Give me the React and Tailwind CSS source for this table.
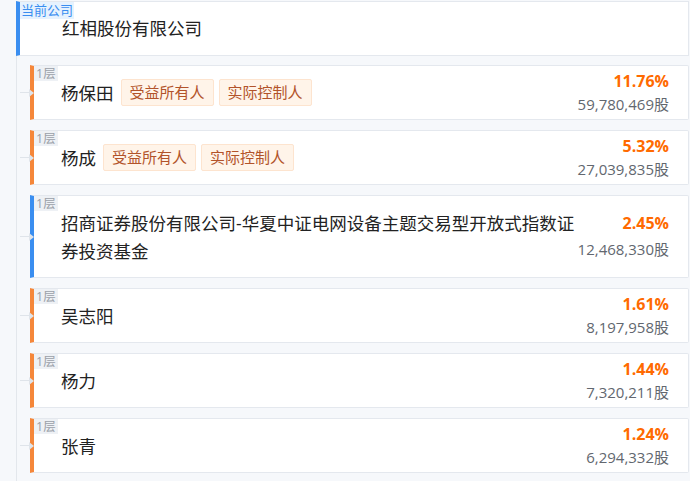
import React from 'react';

const holders = [
  { name: '杨保田', tags: ['受益所有人', '实际控制人'], pct: '11.76%', shares: '59,780,469股', kind: 'person' },
  { name: '杨成', tags: ['受益所有人', '实际控制人'], pct: '5.32%', shares: '27,039,835股', kind: 'person' },
  { name: '招商证券股份有限公司-华夏中证电网设备主题交易型开放式指数证券投资基金', tags: [], pct: '2.45%', shares: '12,468,330股', kind: 'company' },
  { name: '吴志阳', tags: [], pct: '1.61%', shares: '8,197,958股', kind: 'person' },
  { name: '杨力', tags: [], pct: '1.44%', shares: '7,320,211股', kind: 'person' },
  { name: '张青', tags: [], pct: '1.24%', shares: '6,294,332股', kind: 'person' },
];

function Arrow() {
  return (
    <div className="absolute left-[-14px] top-1/2 -translate-y-1/2 flex items-center">
      <div className="w-[9px] h-px bg-[#dfe4ea]" />
      <div className="w-0 h-0 border-y-[4px] border-y-transparent border-l-[5px] border-l-[#dfe4ea]" />
    </div>
  );
}

function HolderCard({ h }) {
  const isCompany = h.kind === 'company';
  return (
    <div
      className={
        'relative flex items-center bg-white border border-[#e4e8ee] rounded-r-[2px] border-l-4 ' +
        (isCompany ? 'border-l-[#3a8ef0] h-[83px]' : 'border-l-[#f5873a] h-[55px]')
      }
    >
      <Arrow />
      <span className="absolute left-0 top-0 px-[2px] h-[15px] leading-[15px] text-[12.5px] text-[#9aa0a8] bg-[#eef1f5]">
        1层
      </span>
      <div className="flex-1 pl-[27px] mr-[-8px] flex items-center flex-wrap gap-x-[5px]">
        <span className="text-[17.5px] leading-[28px] text-[#222] mr-[2px]">{h.name}</span>
        {h.tags.map((t) => (
          <span
            key={t}
            className="h-[27px] leading-[25px] px-[8px] text-[15px] text-[#b2532a] bg-[#fff4e9] border border-[#fde4cf] rounded-[2px]"
          >
            {t}
          </span>
        ))}
      </div>
      <div className={'flex flex-col items-end pr-[19px] shrink-0 ' + (isCompany ? 'gap-[3px]' : '')}>
        <span className="text-[16px] leading-[23px] font-bold text-[#ff6a00]">{h.pct}</span>
        <span className="text-[15px] leading-[23px] text-[#62676f]">{h.shares}</span>
      </div>
    </div>
  );
}

export default function App() {
  return (
    <div className="w-[690px] h-[481px] overflow-hidden bg-[#f6f8fb] font-['Open_Sans','Noto_Sans_CJK_SC',sans-serif] pt-px">
      {/* Current company */}
      <div className="relative ml-[16px] mr-px h-[55px] bg-white border border-[#e4e8ee] border-l-4 border-l-[#3a8ef0] flex items-center">
        <span className="absolute left-0 top-0 h-[17px] leading-[17px] px-[1px] text-[13px] text-[#3a8ef0] bg-[#e6f2fe]">
          当前公司
        </span>
        <span className="pl-[42px] text-[17.5px] text-[#222]">红相股份有限公司</span>
      </div>

      {/* Holders */}
      <div className="ml-[16px] border-l border-[#e3e7ec] pl-[13px] pt-[9px] pb-[10px] flex flex-col gap-[10px] mr-px">
        {holders.map((h) => (
          <HolderCard key={h.name} h={h} />
        ))}
      </div>
    </div>
  );
}
